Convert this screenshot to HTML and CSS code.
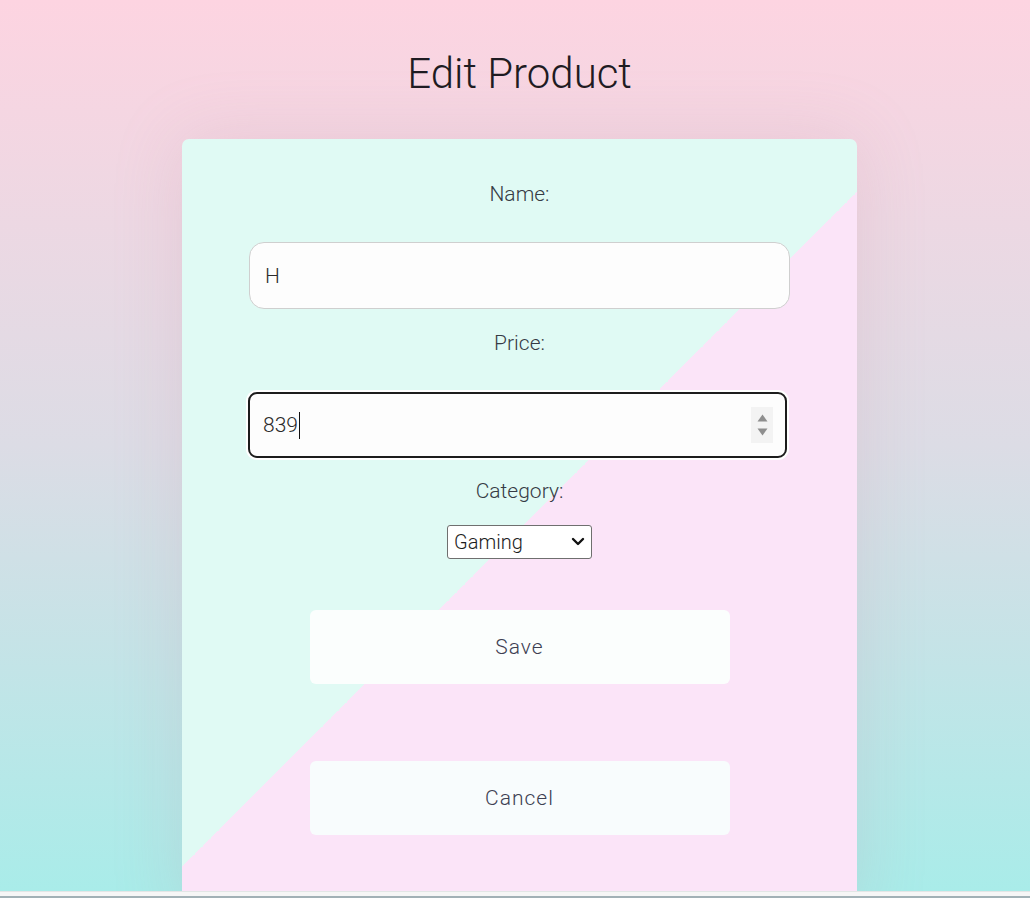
FILE: index.html
```html
<!DOCTYPE html>
<html lang="en">
<head>
<meta charset="utf-8">
<title>Edit Product</title>
<link rel="stylesheet" href="styles.css">
</head>
<body>
<div class="page">
  <h1 class="title">Edit Product</h1>
  <form class="card">
    <label class="label">Name:</label>
    <div class="field"><span class="value">H</span></div>
    <label class="label label-price">Price:</label>
    <div class="field field-focused">
      <span class="value">839</span><span class="caret"></span>
      <span class="spin">
        <svg width="11" height="8" viewBox="0 0 11 8"><path d="M5.5 0.5 L10.5 7.5 L0.5 7.5 Z" fill="#8e8e8e"/></svg>
        <svg width="11" height="8" viewBox="0 0 11 8"><path d="M0.5 0.5 L10.5 0.5 L5.5 7.5 Z" fill="#8e8e8e"/></svg>
      </span>
    </div>
    <label class="label label-cat">Category:</label>
    <div class="select">
      <span class="select-text">Gaming</span>
      <svg class="chev" width="14" height="10" viewBox="0 0 14 10"><path d="M2 2 L7 7 L12 2" fill="none" stroke="#111" stroke-width="2.4" stroke-linecap="round" stroke-linejoin="round"/></svg>
    </div>
    <button type="button" class="btn btn-save">Save</button>
    <button type="button" class="btn btn-cancel">Cancel</button>
  </form>
</div>
<div class="bottom-bar"></div>
</body>
</html>
```

FILE: styles.css
```css
html, body {
  margin: 0;
  padding: 0;
}

body {
  font-family: Roboto, "Liberation Sans", sans-serif;
  font-weight: 300;
  background: #f4f5f5;
}

.page {
  height: 891px;
  overflow: hidden;
  padding-left: 9px;
  box-sizing: border-box;
  background: linear-gradient(180deg, #fdd4e1 0%, #dcdce5 50%, #a9ece9 100%);
  display: flex;
  flex-direction: column;
  align-items: center;
}

.title {
  margin: 46px 0 0 0;
  font-size: 42px;
  line-height: 56px;
  font-weight: 300;
  letter-spacing: 0;
  color: #1e1c22;
}

.card {
  margin-top: 37px;
  width: 675px;
  height: 781px;
  flex: none;
  box-sizing: border-box;
  border-radius: 7px;
  background: linear-gradient(135deg, #e0faf4 50%, #fbe4f8 50%);
  box-shadow: 0 0 70px rgba(200, 140, 160, 0.2);
  display: flex;
  flex-direction: column;
  align-items: center;
  padding-top: 43px;
}

.label {
  font-size: 21px;
  line-height: 24px;
  color: #363b44;
}

.field {
  position: relative;
  margin-top: 36px;
  width: 541px;
  height: 67px;
  box-sizing: border-box;
  border: 1px solid #cfcfcf;
  border-radius: 15px;
  background: #fdfdfd;
  display: flex;
  align-items: center;
  padding-left: 15px;
  font-size: 21px;
  color: #2b2b2b;
}

.label-price {
  margin-top: 22px;
}

.field-focused {
  margin-top: 37px;
  margin-right: 4px;
  width: 539px;
  height: 66px;
  border: 2.5px solid #1c1c1c;
  border-radius: 9px;
  box-shadow: 0 0 0 2px #ffffff;
  padding-left: 13px;
}

.caret {
  display: inline-block;
  width: 1px;
  height: 27px;
  background: #111;
  margin-left: 1px;
}

.spin {
  position: absolute;
  right: 12px;
  top: 13px;
  width: 22px;
  height: 36px;
  background: #f3f3f3;
  display: flex;
  flex-direction: column;
  align-items: center;
  justify-content: center;
  gap: 6px;
}

.label-cat {
  margin-top: 21px;
}

.select {
  margin-top: 22px;
  width: 145px;
  height: 34px;
  box-sizing: border-box;
  border: 1px solid #6f6f6f;
  border-radius: 3px;
  background: #fff;
  display: flex;
  align-items: center;
  justify-content: space-between;
  padding: 0 6px 0 6px;
}

.select-text {
  font-size: 20px;
  color: #1c1c1c;
}

.chev {
  display: block;
}

.btn {
  width: 420px;
  height: 74px;
  border: none;
  border-radius: 6px;
  font-family: inherit;
  font-weight: 300;
  font-size: 21px;
  letter-spacing: 1px;
  color: #3d4052;
  cursor: pointer;
}

.btn-save {
  margin-top: 51px;
  background: #fbfefd;
}

.btn-cancel {
  margin-top: 77px;
  background: #f8fcfd;
}

.bottom-bar {
  height: 7px;
  box-sizing: border-box;
  border-top: 1px solid #e3e6e6;
  border-bottom: 2px solid #a2b1b6;
  background: #f6f6f6;
}
```
